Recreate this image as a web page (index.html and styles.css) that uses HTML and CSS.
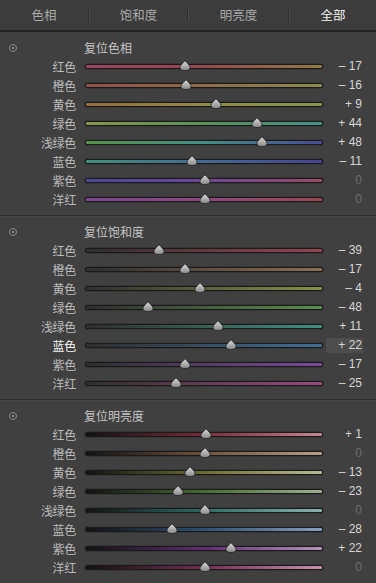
FILE: index.html
```html
<!DOCTYPE html>
<html lang="zh">

<head>
    <meta charset="UTF-8">
    <meta name="viewport" content="width=device-width, initial-scale=1.0">
    <title>HSL</title>
    <link rel="stylesheet" href="styles.css">
</head>

<body onload="hienBang()">
    <svg class="an" width="0" height="0">
        <defs>
            <linearGradient id="xam" x1="0" y1="0" x2="0" y2="1">
                <stop offset="0" stop-color="#dcdcdc" />
                <stop offset="1" stop-color="#888888" />
            </linearGradient>
        </defs>
    </svg>
    <div class="bangdieukhien">
        <div class="thanhtab">
            <div class="tab t1">色相</div>
            <div class="vach"></div>
            <div class="tab t2">饱和度</div>
            <div class="vach"></div>
            <div class="tab t3">明亮度</div>
            <div class="vach"></div>
            <div class="tab t4 dangchon">全部</div>
        </div>
        <div id="noidung"></div>
    </div>
    <script>
        var tenMau = ['红色', '橙色', '黄色', '绿色', '浅绿色', '蓝色', '紫色', '洋红'];

        var nhom = [
            { tieuDe: '复位色相', loai: 'h', giaTri: [-17, -16, 9, 44, 48, -11, 0, 0], chon: -1 },
            { tieuDe: '复位饱和度', loai: 's', giaTri: [-39, -17, -4, -48, 11, 22, -17, -25], chon: 5 },
            { tieuDe: '复位明亮度', loai: 'l', giaTri: [1, 0, -13, -23, 0, -28, 22, 0], chon: -1 }
        ];

        function vietSo(v) {
            if (v > 0) return '+ ' + v;
            if (v < 0) return '\u2013 ' + (-v);
            return '0';
        }

        function hienBang() {
            var html = '';
            for (let n = 0; n < nhom.length; n++) {
                var g = nhom[n];
                html += `<div class="nhom">
                    <div class="tieude">
                        <span class="nutdat"><span class="cham"></span></span>
                        <span class="chu">${g.tieuDe}</span>
                    </div>`;
                for (let i = 0; i < tenMau.length; i++) {
                    var v = g.giaTri[i];
                    var chon = g.chon == i ? ' chon' : '';
                    html += `<div class="dong${chon}">
                        <div class="nhan">${tenMau[i]}</div>
                        <div class="ray ${g.loai}${i}">
                            <svg class="num" style="left: calc(${(v + 100) / 2}% - 5px)" width="12" height="11" viewBox="0 0 12 11">
                                <path d="M6 0.4 C7.2 2.8 11.1 4.7 11.1 7.6 C11.1 9.7 8.7 10.5 6 10.5 C3.3 10.5 0.9 9.7 0.9 7.6 C0.9 4.7 4.8 2.8 6 0.4Z" fill="url(#xam)" stroke="#262626" stroke-width="0.8" />
                            </svg>
                        </div>
                        <div class="giatri${v == 0 ? ' khong' : ''}">${vietSo(v)}</div>
                    </div>`;
                }
                html += `</div>`;
            }
            document.getElementById('noidung').innerHTML = html;
        }
    </script>
</body>

</html>
```

FILE: styles.css
```css
body {
    margin: 0;
    background-color: #3f3f3f;
    font-family: "Liberation Sans", "Noto Sans CJK SC", sans-serif;
    font-size: 12px;
}

.an {
    position: absolute;
}

.bangdieukhien {
    width: 376px;
    height: 583px;
    overflow: hidden;
    background-color: #404040;
}

/* thanh tab tren cung */
.thanhtab {
    display: flex;
    align-items: center;
    height: 30px;
    background-color: #3c3c3c;
    border-top: 1px solid #464646;
    border-bottom: 2px solid #232323;
    box-sizing: content-box;
    margin-top: -1px;
}

.tab {
    text-align: center;
    color: #a9a9a9;
    font-family: "Noto Sans CJK SC", sans-serif;
    font-size: 12.5px;
    line-height: 30px;
}

.t1 {
    width: 88px;
}

.t2 {
    width: 97px;
}

.t3 {
    width: 99px;
}

.t4 {
    width: 86px;
}

.dangchon {
    color: #f2f2f2;
}

.vach {
    width: 1px;
    height: 12px;
    background-color: #2e2e2e;
    border-right: 1px solid #4a4a4a;
}

/* moi nhom thanh truot */
.nhom {
    padding: 6px 0 6px;
    border-bottom: 1px solid #2f2f2f;
    box-shadow: 0 1px 0 #474747;
}

.tieude {
    display: flex;
    align-items: center;
    height: 19px;
}

.nutdat {
    width: 6px;
    height: 6px;
    margin-left: 9px;
    border: 1px solid #8a8a8a;
    border-radius: 50%;
    display: flex;
    align-items: center;
    justify-content: center;
}

.cham {
    width: 2px;
    height: 2px;
    border-radius: 50%;
    background-color: #9a9a9a;
}

.tieude .chu {
    margin-left: 67px;
    color: #c4c4c4;
    font-family: "Noto Sans CJK SC", sans-serif;
}

.dong {
    display: flex;
    align-items: center;
    height: 19px;
}

.nhan {
    width: 76px;
    text-align: right;
    color: #bcbcbc;
    font-family: "Noto Sans CJK SC", sans-serif;
    letter-spacing: -0.3px;
}

.chon .nhan {
    color: #f6f6f6;
}

.ray {
    position: relative;
    width: 236px;
    height: 3px;
    margin-left: 9px;
    border: 1px solid #1a1a1a;
    border-radius: 2px;
    box-shadow: 0 0 0 1px #363636;
}

.ray::before {
    content: '';
    position: absolute;
    left: 0;
    right: 0;
    top: -6px;
    height: 1px;
    background: repeating-linear-gradient(90deg, #363636 0, #363636 1px, transparent 1px, transparent 10%);
}

.num {
    position: absolute;
    top: -5px;
}

.giatri {
    width: 36px;
    height: 15px;
    line-height: 15px;
    margin-left: 3px;
    padding-right: 1px;
    text-align: right;
    color: #d6d6d6;
}

.giatri.khong {
    color: #6c6c6c;
}

.chon .giatri {
    background-color: #4d4d4d;
}

/* mau sac thanh truot - sac tuong */
.h0 { background: linear-gradient(90deg, #9c4661, #9a4450 45%, #927a44); }
.h1 { background: linear-gradient(90deg, #944f48, #8f6c48 50%, #8a8c4c); }
.h2 { background: linear-gradient(90deg, #956c40, #928a44 50%, #84984a); }
.h3 { background: linear-gradient(90deg, #86964a, #589258 50%, #448e88); }
.h4 { background: linear-gradient(90deg, #579248, #438e86 50%, #474a94); }
.h5 { background: linear-gradient(90deg, #43907a, #426e92 45%, #47448f); }
.h6 { background: linear-gradient(90deg, #4a4798, #6e4798 50%, #984a66); }
.h7 { background: linear-gradient(90deg, #7c4794, #904780 50%, #9a4850); }

/* bao hoa */
.s0 { background: linear-gradient(90deg, #2e2e2e, #9a4450); }
.s1 { background: linear-gradient(90deg, #2e2e2e, #8f6e52); }
.s2 { background: linear-gradient(90deg, #2e2e2e, #8a9048); }
.s3 { background: linear-gradient(90deg, #2e2e2e, #5a8e4c); }
.s4 { background: linear-gradient(90deg, #2e2e2e, #40917e); }
.s5 { background: linear-gradient(90deg, #2e2e2e, #416e96); }
.s6 { background: linear-gradient(90deg, #2e2e2e, #7c4a9c); }
.s7 { background: linear-gradient(90deg, #2e2e2e, #9a4a7e); }

/* do sang */
.l0 { background: linear-gradient(90deg, #121212, #7a2a38 50%, #c8848f); }
.l1 { background: linear-gradient(90deg, #121212, #6e523c 50%, #b89e88); }
.l2 { background: linear-gradient(90deg, #121212, #6c6c30 50%, #b8b892); }
.l3 { background: linear-gradient(90deg, #121212, #446c30 50%, #9cb090); }
.l4 { background: linear-gradient(90deg, #121212, #2c6c64 50%, #88b2ae); }
.l5 { background: linear-gradient(90deg, #121212, #2c5074 50%, #889ebc); }
.l6 { background: linear-gradient(90deg, #121212, #602c74 50%, #b692bc); }
.l7 { background: linear-gradient(90deg, #121212, #742c52 50%, #c890ae); }
```
